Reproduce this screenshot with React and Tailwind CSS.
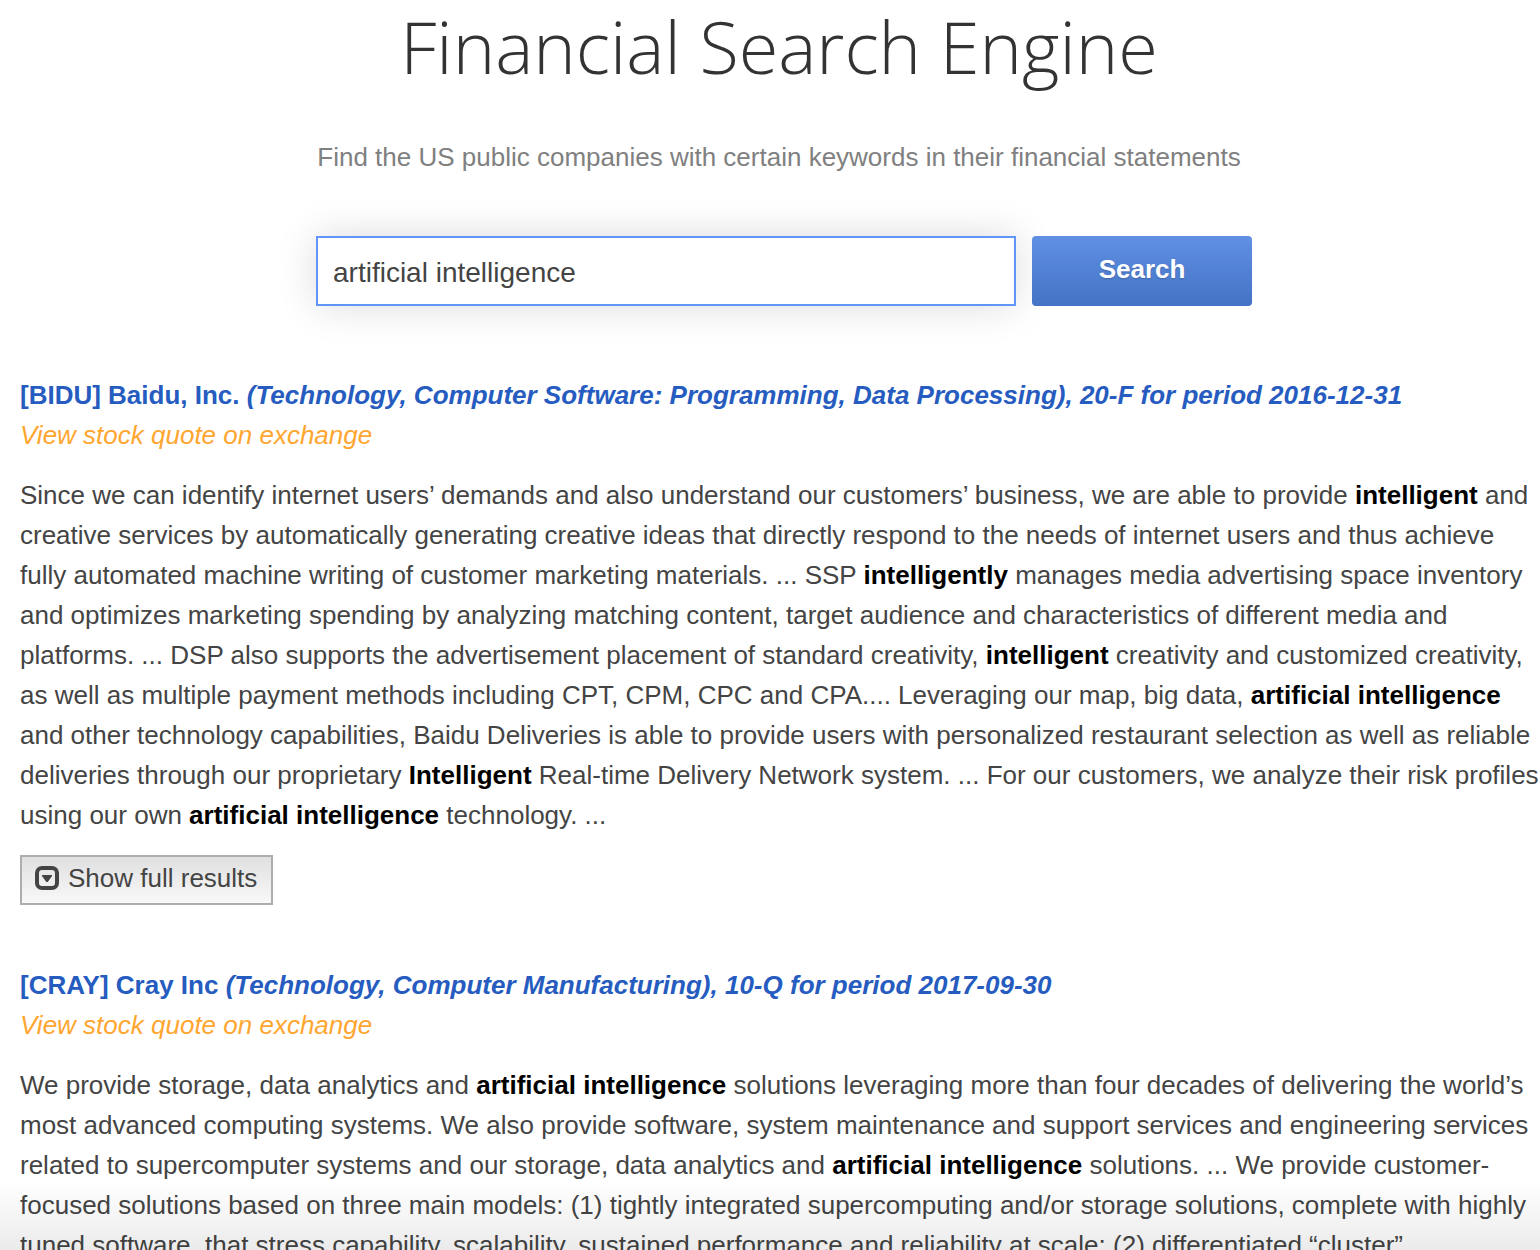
const results = [
  {
    company: "[BIDU] Baidu, Inc.",
    filing:
      "(Technology, Computer Software: Programming, Data Processing), 20-F for period 2016-12-31",
    excerpt: (
      <>
        Since we can identify internet users’ demands and also understand our
        customers’ business, we are able to provide <Match>intelligent</Match>{" "}
        and creative services by automatically generating creative ideas that
        directly respond to the needs of internet users and thus achieve fully
        automated machine writing of customer marketing materials. ... SSP{" "}
        <Match>intelligently</Match> manages media advertising space inventory
        and optimizes marketing spending by analyzing matching content, target
        audience and characteristics of different media and platforms. ... DSP
        also supports the advertisement placement of standard creativity,{" "}
        <Match>intelligent</Match> creativity and customized creativity, as well
        as multiple payment methods including CPT, CPM, CPC and CPA.... Leveraging
        our map, big data, <Match>artificial intelligence</Match> and other
        technology capabilities, Baidu Deliveries is able to provide users with
        personalized restaurant selection as well as reliable deliveries through
        our proprietary <Match>Intelligent</Match> Real-time Delivery Network
        system. ... For our customers, we analyze their risk profiles using our
        own <Match>artificial intelligence</Match> technology. ...
      </>
    ),
    expandable: true,
  },
  {
    company: "[CRAY] Cray Inc",
    filing: "(Technology, Computer Manufacturing), 10-Q for period 2017-09-30",
    excerpt: (
      <>
        We provide storage, data analytics and{" "}
        <Match>artificial intelligence</Match> solutions leveraging more than
        four decades of delivering the world’s most advanced computing systems.
        We also provide software, system maintenance and support services and
        engineering services related to supercomputer systems and our storage,
        data analytics and <Match>artificial intelligence</Match> solutions. ...
        We provide customer-focused solutions based on three main models: (1)
        tightly integrated supercomputing and/or storage solutions, complete with
        highly tuned software, that stress capability, scalability, sustained
        performance and reliability at scale; (2) differentiated “cluster”
      </>
    ),
  },
];

function Match({ children }) {
  return <b className="font-bold text-black">{children}</b>;
}

function ToggleIcon() {
  return (
    <svg viewBox="0 0 24 24" className="size-6" aria-hidden="true">
      <rect x="2" y="2" width="20" height="20" rx="5" fill="none" stroke="#444" strokeWidth="4" />
      <path d="M7 9h10v1l-4.3 6h-1.4L7 10z" fill="#444" />
    </svg>
  );
}

function Result({ company, filing, excerpt, expandable }) {
  return (
    <article className="mb-15">
      <h2 className="font-bold text-[#265cc0]">
        <a href="#filing">
          {company} <em>{filing}</em>
        </a>
      </h2>
      <a href="#quote" className="italic text-[#ffa630]">
        View stock quote on exchange
      </a>
      <p className="mt-5">{excerpt}</p>
      {expandable && (
        <button
          type="button"
          className="mt-5 flex h-[50px] items-center gap-[9px] border-2 border-[#adadad] bg-linear-to-b from-[#e0e0e0] to-[#f8f8f8] px-[14px] pb-1 pl-[13px]"
        >
          <ToggleIcon />
          Show full results
        </button>
      )}
    </article>
  );
}

export default function App() {
  return (
    <div className="relative h-screen overflow-hidden bg-white font-['Liberation_Sans',Arial,sans-serif] text-[26px] leading-10 text-[#444]">
      <header className="flex flex-col items-center pl-[18px]">
        <h1 className="font-['Open_Sans',sans-serif] text-[72px] leading-[92px] font-light text-[#333]">
          Financial Search Engine
        </h1>
        <p className="mt-[45px] text-[#808080]">
          Find the US public companies with certain keywords in their financial
          statements
        </p>
        <form
          className="mt-[59px] flex gap-4 pl-[10px]"
          onSubmit={(event) => event.preventDefault()}
        >
          <input
            type="text"
            aria-label="Keywords"
            defaultValue="artificial intelligence"
            className="h-[70px] w-[700px] border-2 border-[#6196f9] bg-white px-[15px] pt-1 text-[28px] shadow-[0_0_40px_rgba(0,0,0,0.14)] outline-none"
          />
          <button
            type="submit"
            className="relative h-[70px] w-[220px] rounded-sm bg-linear-to-b from-[#6090e3] to-[#4473c6] pb-1 font-bold text-white text-shadow-[0_1px_2px_rgba(0,0,0,0.2)]"
          >
            Search
          </button>
        </form>
      </header>

      <main className="mt-[69px] pl-5">
        {results.map((result) => (
          <Result key={result.company} {...result} />
        ))}
      </main>

      <div className="pointer-events-none absolute inset-x-0 bottom-0 h-17 bg-linear-to-b from-transparent to-black/8" />
    </div>
  );
}
